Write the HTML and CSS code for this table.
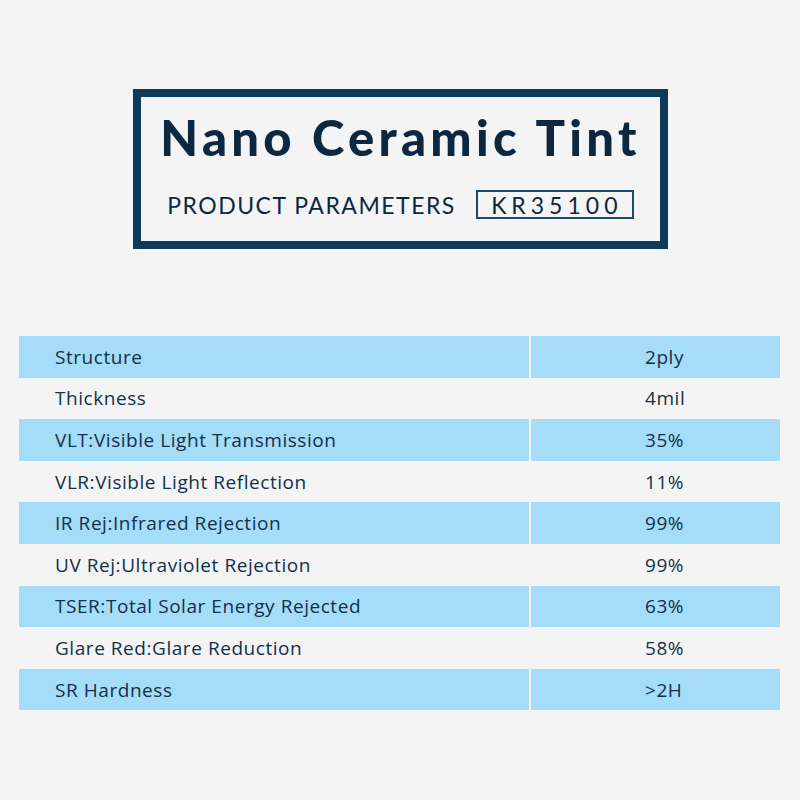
FILE: index.html
```html
<!DOCTYPE html>
<html>
<head>
<meta charset="utf-8">
<link rel="stylesheet" href="styles.css">
</head>
<body>
<div class="page">
  <div class="header">
    <h1 class="title">Nano Ceramic Tint</h1>
    <div class="sub">
      <span class="sub-label">PRODUCT PARAMETERS</span>
      <span class="model">KR35100</span>
    </div>
  </div>
  <div class="table">
    <div class="row blue"><div class="label">Structure</div><div class="value">2ply</div></div>
    <div class="row"><div class="label">Thickness</div><div class="value">4mil</div></div>
    <div class="row blue"><div class="label">VLT:Visible Light Transmission</div><div class="value">35%</div></div>
    <div class="row"><div class="label">VLR:Visible Light Reflection</div><div class="value">11%</div></div>
    <div class="row blue"><div class="label">IR Rej:Infrared Rejection</div><div class="value">99%</div></div>
    <div class="row"><div class="label">UV Rej:Ultraviolet Rejection</div><div class="value">99%</div></div>
    <div class="row blue"><div class="label">TSER:Total Solar Energy Rejected</div><div class="value">63%</div></div>
    <div class="row"><div class="label">Glare Red:Glare Reduction</div><div class="value">58%</div></div>
    <div class="row blue"><div class="label">SR Hardness</div><div class="value">&gt;2H</div></div>
  </div>
</div>
</body>
</html>
```

FILE: styles.css
```css
html, body {
  margin: 0;
  padding: 0;
  background: #f4f4f4;
}
.page {
  width: 800px;
  height: 800px;
  padding-top: 89px;
  box-sizing: border-box;
}
.header {
  margin-left: 133px;
  width: 535px;
  height: 160px;
  box-sizing: border-box;
  border: 8px solid #0d3a56;
  display: flex;
  flex-direction: column;
  align-items: center;
  color: #0c2840;
}
.title {
  margin: 12px 0 0 0;
  font-family: "Lato", "DejaVu Sans", sans-serif;
  font-weight: 900;
  font-size: 49px;
  line-height: 56px;
  letter-spacing: 4.3px;
  color: #0c2840;
}
.sub {
  margin-top: 25px;
  display: flex;
  align-items: center;
  gap: 20px;
  font-family: "Lato", "DejaVu Sans", sans-serif;
}
.sub-label {
  font-size: 23px;
  letter-spacing: 1.5px;
  font-weight: 400;
}
.model {
  width: 158px;
  height: 29px;
  box-sizing: border-box;
  border: 2px solid #1c4a68;
  display: flex;
  align-items: center;
  justify-content: center;
  font-size: 23px;
  letter-spacing: 5px;
  padding-left: 4px;
}
.table {
  margin-top: 87px;
  margin-left: 19px;
  width: 761px;
  display: flex;
  flex-direction: column;
}
.row {
  display: grid;
  grid-template-columns: 510px 2px 249px;
  height: 41.6px;
  font-family: "Open Sans", "Noto Sans", sans-serif;
  font-size: 19px;
  letter-spacing: 0.55px;
  color: #12304a;
}
.label {
  grid-column: 1;
  padding-left: 36px;
  display: flex;
  align-items: center;
}
.value {
  grid-column: 3;
  padding-left: 114px;
  display: flex;
  align-items: center;
}
.row.blue .label,
.row.blue .value {
  background: #a5dcf8;
}
```
